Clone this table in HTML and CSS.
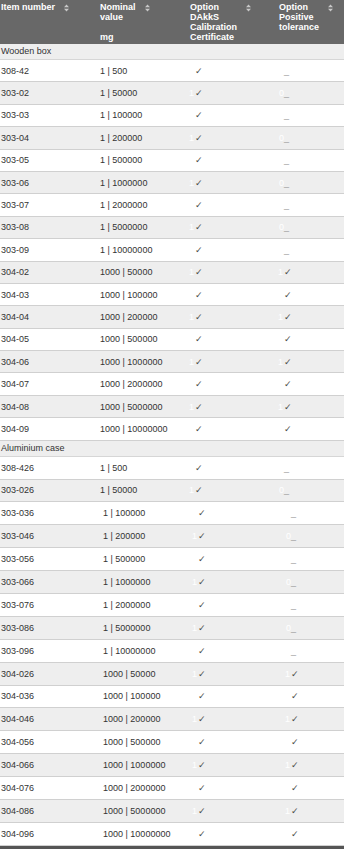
FILE: index.html
```html
<!DOCTYPE html>
<html>
<head>
<meta charset="utf-8">
<link rel="stylesheet" href="styles.css">
</head>
<body>
<div class="table">
  <div class="head">
    <div class="th"><div class="tt">Item number</div><svg class="sort" width="5" height="8" viewBox="0 0 5 8"><path d="M2.5 0.5 L5 3.3 L0 3.3 Z M0 4.7 L5 4.7 L2.5 7.5 Z"/></svg></div>
    <div class="th"><div class="tt">Nominal<br>value<br><br>mg</div><svg class="sort" width="5" height="8" viewBox="0 0 5 8"><path d="M2.5 0.5 L5 3.3 L0 3.3 Z M0 4.7 L5 4.7 L2.5 7.5 Z"/></svg></div>
    <div class="th"><div class="tt">Option<br>DAkkS<br>Calibration<br>Certificate</div><svg class="sort" width="5" height="8" viewBox="0 0 5 8"><path d="M2.5 0.5 L5 3.3 L0 3.3 Z M0 4.7 L5 4.7 L2.5 7.5 Z"/></svg></div>
    <div class="th"><div class="tt">Option<br>Positive<br>tolerance</div><svg class="sort" width="5" height="8" viewBox="0 0 5 8"><path d="M2.5 0.5 L5 3.3 L0 3.3 Z M0 4.7 L5 4.7 L2.5 7.5 Z"/></svg></div>
  </div>

  <div class="group">Wooden box</div>
  <div class="row a"><span>308-42</span><span class="v">1 | 500</span><span class="c"><i>1</i>✓</span><span class="d"><i>0</i>_</span></div>
  <div class="row a g"><span>303-02</span><span class="v">1 | 50000</span><span class="c"><i>1</i>✓</span><span class="d"><i>0</i>_</span></div>
  <div class="row a"><span>303-03</span><span class="v">1 | 100000</span><span class="c"><i>1</i>✓</span><span class="d"><i>0</i>_</span></div>
  <div class="row a g"><span>303-04</span><span class="v">1 | 200000</span><span class="c"><i>1</i>✓</span><span class="d"><i>0</i>_</span></div>
  <div class="row a"><span>303-05</span><span class="v">1 | 500000</span><span class="c"><i>1</i>✓</span><span class="d"><i>0</i>_</span></div>
  <div class="row a g"><span>303-06</span><span class="v">1 | 1000000</span><span class="c"><i>1</i>✓</span><span class="d"><i>0</i>_</span></div>
  <div class="row a"><span>303-07</span><span class="v">1 | 2000000</span><span class="c"><i>1</i>✓</span><span class="d"><i>0</i>_</span></div>
  <div class="row a g"><span>303-08</span><span class="v">1 | 5000000</span><span class="c"><i>1</i>✓</span><span class="d"><i>0</i>_</span></div>
  <div class="row a"><span>303-09</span><span class="v">1 | 10000000</span><span class="c"><i>1</i>✓</span><span class="d"><i>0</i>_</span></div>
  <div class="row a g"><span>304-02</span><span class="v">1000 | 50000</span><span class="c"><i>1</i>✓</span><span class="c"><i>1</i>✓</span></div>
  <div class="row a"><span>304-03</span><span class="v">1000 | 100000</span><span class="c"><i>1</i>✓</span><span class="c"><i>1</i>✓</span></div>
  <div class="row a g"><span>304-04</span><span class="v">1000 | 200000</span><span class="c"><i>1</i>✓</span><span class="c"><i>1</i>✓</span></div>
  <div class="row a"><span>304-05</span><span class="v">1000 | 500000</span><span class="c"><i>1</i>✓</span><span class="c"><i>1</i>✓</span></div>
  <div class="row a g"><span>304-06</span><span class="v">1000 | 1000000</span><span class="c"><i>1</i>✓</span><span class="c"><i>1</i>✓</span></div>
  <div class="row a"><span>304-07</span><span class="v">1000 | 2000000</span><span class="c"><i>1</i>✓</span><span class="c"><i>1</i>✓</span></div>
  <div class="row a g"><span>304-08</span><span class="v">1000 | 5000000</span><span class="c"><i>1</i>✓</span><span class="c"><i>1</i>✓</span></div>
  <div class="row a"><span>304-09</span><span class="v">1000 | 10000000</span><span class="c"><i>1</i>✓</span><span class="c"><i>1</i>✓</span></div>

  <div class="group">Aluminium case</div>
  <div class="row b"><span>308-426</span><span class="v">1 | 500</span><span class="c"><i>1</i>✓</span><span class="d"><i>0</i>_</span></div>
  <div class="row b g"><span>303-026</span><span class="v">1 | 50000</span><span class="c"><i>1</i>✓</span><span class="d"><i>0</i>_</span></div>
  <div class="row b s"><span>303-036</span><span class="v">1 | 100000</span><span class="c"><i>1</i>✓</span><span class="d"><i>0</i>_</span></div>
  <div class="row b s g"><span>303-046</span><span class="v">1 | 200000</span><span class="c"><i>1</i>✓</span><span class="d"><i>0</i>_</span></div>
  <div class="row b s"><span>303-056</span><span class="v">1 | 500000</span><span class="c"><i>1</i>✓</span><span class="d"><i>0</i>_</span></div>
  <div class="row b s g"><span>303-066</span><span class="v">1 | 1000000</span><span class="c"><i>1</i>✓</span><span class="d"><i>0</i>_</span></div>
  <div class="row b s"><span>303-076</span><span class="v">1 | 2000000</span><span class="c"><i>1</i>✓</span><span class="d"><i>0</i>_</span></div>
  <div class="row b s g"><span>303-086</span><span class="v">1 | 5000000</span><span class="c"><i>1</i>✓</span><span class="d"><i>0</i>_</span></div>
  <div class="row b s"><span>303-096</span><span class="v">1 | 10000000</span><span class="c"><i>1</i>✓</span><span class="d"><i>0</i>_</span></div>
  <div class="row b s g"><span>304-026</span><span class="v">1000 | 50000</span><span class="c"><i>1</i>✓</span><span class="c"><i>1</i>✓</span></div>
  <div class="row b s"><span>304-036</span><span class="v">1000 | 100000</span><span class="c"><i>1</i>✓</span><span class="c"><i>1</i>✓</span></div>
  <div class="row b s g"><span>304-046</span><span class="v">1000 | 200000</span><span class="c"><i>1</i>✓</span><span class="c"><i>1</i>✓</span></div>
  <div class="row b s"><span>304-056</span><span class="v">1000 | 500000</span><span class="c"><i>1</i>✓</span><span class="c"><i>1</i>✓</span></div>
  <div class="row b s g"><span>304-066</span><span class="v">1000 | 1000000</span><span class="c"><i>1</i>✓</span><span class="c"><i>1</i>✓</span></div>
  <div class="row b s"><span>304-076</span><span class="v">1000 | 2000000</span><span class="c"><i>1</i>✓</span><span class="c"><i>1</i>✓</span></div>
  <div class="row b s g"><span>304-086</span><span class="v">1000 | 5000000</span><span class="c"><i>1</i>✓</span><span class="c"><i>1</i>✓</span></div>
  <div class="row b s"><span>304-096</span><span class="v">1000 | 10000000</span><span class="c"><i>1</i>✓</span><span class="c"><i>1</i>✓</span></div>
</div>
</body>
</html>
```
FILE: styles.css
```css
html, body {
  margin: 0;
  padding: 0;
  background: #fff;
}
body {
  font-family: "Liberation Sans", Arial, sans-serif;
  font-size: 9px;
  color: #333;
}
.table {
  width: 344px;
  border-bottom: 3px solid #555;
}
.head {
  display: grid;
  grid-template-columns: 99px 90px 89px 1fr;
  height: 44px;
  background: #686868;
  color: #fff;
  font-weight: bold;
  line-height: 10px;
}
.th {
  display: flex;
  align-items: flex-start;
  gap: 9px;
  padding: 2px 0 0 1px;
}
.sort {
  fill: #c8c8c8;
  margin-top: 2px;
  flex: none;
}
.group {
  height: 16px;
  box-sizing: border-box;
  padding-left: 1px;
  line-height: 15px;
  background: #eeeeee;
  border-bottom: 1px solid #d6d6d6;
}
.row {
  display: grid;
  grid-template-columns: 99px 90px 89px 1fr;
  align-items: center;
  box-sizing: border-box;
  border-bottom: 1px solid #d0d0d0;
  background: #fff;
}
.row.a { height: 22.4px; }
.row.b { height: 22.9px; }
.row.g { background: #eeeeee; }
.row.s { grid-template-columns: 102px 90px 93px 1fr; }
.row > span { padding-left: 1px; }
.row > .c { padding-left: 0; }
.v { color: #333; }
.c {
  color: #4a4a4a;
  font-family: "DejaVu Sans", sans-serif;
  font-size: 9px;
}
.c i, .d i {
  font-style: normal;
  color: #fff;
  font-family: "Liberation Sans", Arial, sans-serif;
  font-size: 9px;
  margin-right: 1px;
}
.d {
  color: #9a9a9a;
}
.d i { margin-right: 0; }
```
